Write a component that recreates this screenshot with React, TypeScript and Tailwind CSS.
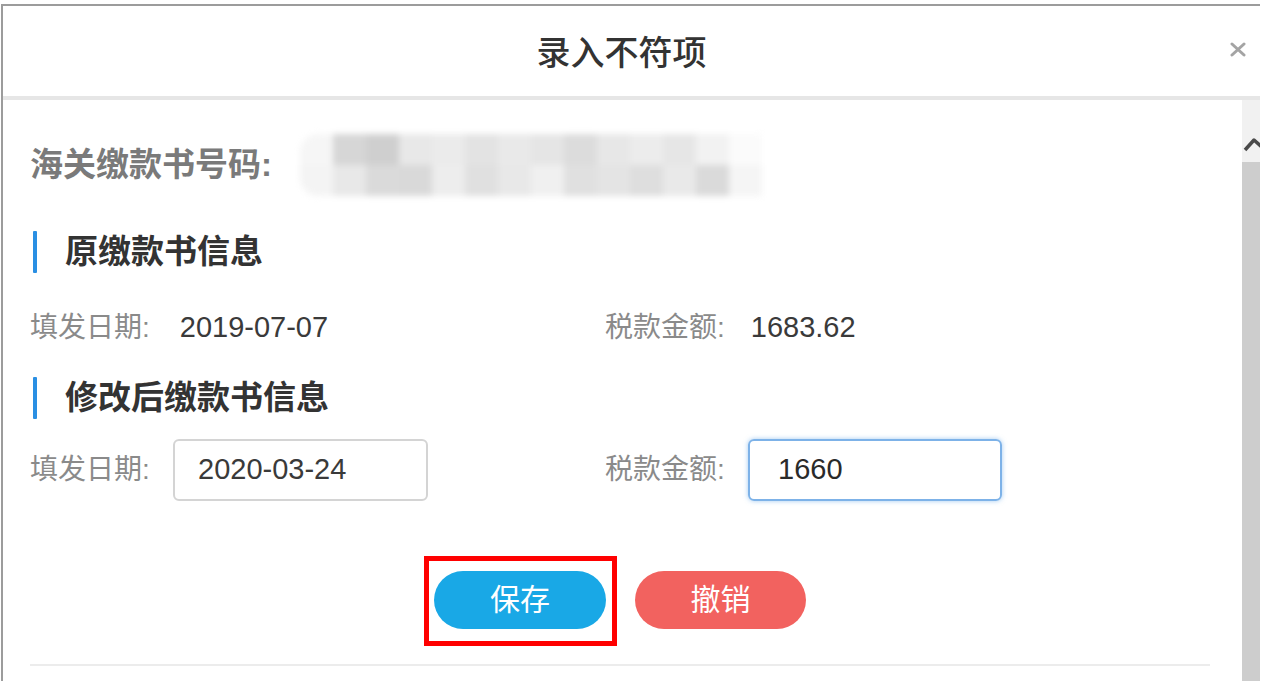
import React from "react";

const font = "font-['Liberation_Sans','Noto_Sans_CJK_SC',sans-serif]";

// pixelated mosaic over the customs number
const mosaicTop = [
  "bg-[#f6f6f6]", "bg-[#d6d6d6]", "bg-[#cfcfcf]", "bg-[#e8e8e8]", "bg-[#ebebeb]", "bg-[#e3e3e3]", "bg-[#e9e9e9]",
  "bg-[#e5e5e5]", "bg-[#dcdcdc]", "bg-[#e7e7e7]", "bg-[#ececec]", "bg-[#e6e6e6]", "bg-[#f2f2f2]", "bg-[#fbfbfb]",
];
const mosaicBottom = [
  "bg-[#f4f4f4]", "bg-[#e8e8e8]", "bg-[#dadada]", "bg-[#d9d9d9]", "bg-[#ededed]", "bg-[#e0e0e0]", "bg-[#e8e8e8]",
  "bg-[#f0f0f0]", "bg-[#e0e0e0]", "bg-[#e4e4e4]", "bg-[#dedede]", "bg-[#e9e9e9]", "bg-[#dadada]", "bg-[#f5f5f5]",
];

function SectionTitle({ children }: { children: React.ReactNode }) {
  return (
    <div className="flex items-center h-[42px]">
      <div className="ml-[3px] w-[4px] h-full bg-[#2a8fe3] rounded-[1px]" />
      <span className="ml-[28px] text-[33px] font-bold text-[#333]">{children}</span>
    </div>
  );
}

export default function App() {
  return (
    <div className={`w-[1264px] h-[681px] bg-white overflow-hidden pt-[4px] pl-[1px] ${font}`}>
      <div className="w-[1259px] h-[677px] border-t-2 border-l-2 border-[#9c9c9c] flex flex-col">
        {/* header */}
        <div className="h-[90px] shrink-0 relative flex items-center justify-center pr-[20px]">
          <h2 className="text-[34px] font-medium text-[#333] leading-none mt-[4px]">录入不符项</h2>
          <svg className="absolute right-[14px] top-[36px]" width="16" height="15" viewBox="0 0 16 15">
            <path d="M2 2 L14 13 M14 2 L2 13" stroke="#a4a4a4" strokeWidth="3" strokeLinecap="round" />
          </svg>
        </div>
        <div className="h-[4px] shrink-0 bg-[#e6e6e6]" />

        <div className="flex flex-1 min-h-0">
          <div className="flex-1 pl-[27px] pr-[32px]">
            {/* number */}
            <div className="mt-[34px] h-[62px] flex items-center">
              <span className="w-[270px] text-[33px] font-semibold text-[#7a7a7a]">海关缴款书号码:</span>
              <div className="blur-[3px] rounded-l-[18px] overflow-hidden">
                <div className="flex">
                  {mosaicTop.map((c, i) => (
                    <div key={i} className={`w-[33px] h-[31px] ${c}`} />
                  ))}
                </div>
                <div className="flex">
                  {mosaicBottom.map((c, i) => (
                    <div key={i} className={`w-[33px] h-[31px] ${c}`} />
                  ))}
                </div>
              </div>
            </div>

            <div className="mt-[35px]">
              <SectionTitle>原缴款书信息</SectionTitle>
            </div>

            <div className="mt-[33px] h-[40px] grid grid-cols-[575px_1fr] items-center">
              <div className="flex items-center">
                <span className="text-[28px] text-[#8a8a8a]">填发日期:</span>
                <span className="ml-[30px] text-[29px] text-[#3a3a3a]">2019-07-07</span>
              </div>
              <div className="flex items-center">
                <span className="text-[28px] text-[#8a8a8a]">税款金额:</span>
                <span className="ml-[26px] text-[29px] text-[#3a3a3a]">1683.62</span>
              </div>
            </div>

            <div className="mt-[31px]">
              <SectionTitle>修改后缴款书信息</SectionTitle>
            </div>

            <div className="mt-[20px] h-[62px] grid grid-cols-[575px_1fr] items-center">
              <div className="flex items-center">
                <span className="w-[143px] text-[28px] text-[#8a8a8a]">填发日期:</span>
                <div className="w-[255px] h-[62px] border-2 border-[#d4d4d4] rounded-[6px] flex items-center pl-[23px] text-[29px] text-[#3a3a3a]">
                  2020-03-24
                </div>
              </div>
              <div className="flex items-center">
                <span className="w-[143px] text-[28px] text-[#8a8a8a]">税款金额:</span>
                <div className="w-[254px] h-[62px] border-2 border-[#7db2e8] rounded-[6px] shadow-[0_0_5px_rgba(90,160,230,0.55)] flex items-center pl-[28px] text-[29px] text-[#2a2a2a] font-medium">
                  1660
                </div>
              </div>
            </div>

            {/* actions */}
            <div className="mt-[70px] flex justify-center gap-[29px]">
              <div className="relative">
                <button className="w-[172px] h-[58px] rounded-full bg-[#19a8e6] text-white text-[30px] leading-none">
                  保存
                </button>
                <div className="absolute -left-[10px] -right-[11px] -top-[15px] -bottom-[17px] border-[5px] border-[#ff0000] pointer-events-none" />
              </div>
              <button className="w-[171px] h-[58px] rounded-full bg-[#f2625f] text-white text-[30px] leading-none">
                撤销
              </button>
            </div>

            <div className="mt-[35px] h-[2px] bg-[#ececec]" />
          </div>

          {/* scrollbar */}
          <div className="w-[18px] shrink-0 flex flex-col">
            <div className="h-[62px] bg-[#f1f1f1] relative overflow-hidden">
              <svg className="absolute left-[1px] top-[36px]" width="20" height="16" viewBox="0 0 20 16">
                <polyline points="2,14 11,4 20,12" fill="none" stroke="#4a4a4a" strokeWidth="3.5" strokeLinejoin="round" />
              </svg>
            </div>
            <div className="flex-1 bg-[#cdcdcd]" />
          </div>
        </div>
      </div>
    </div>
  );
}
